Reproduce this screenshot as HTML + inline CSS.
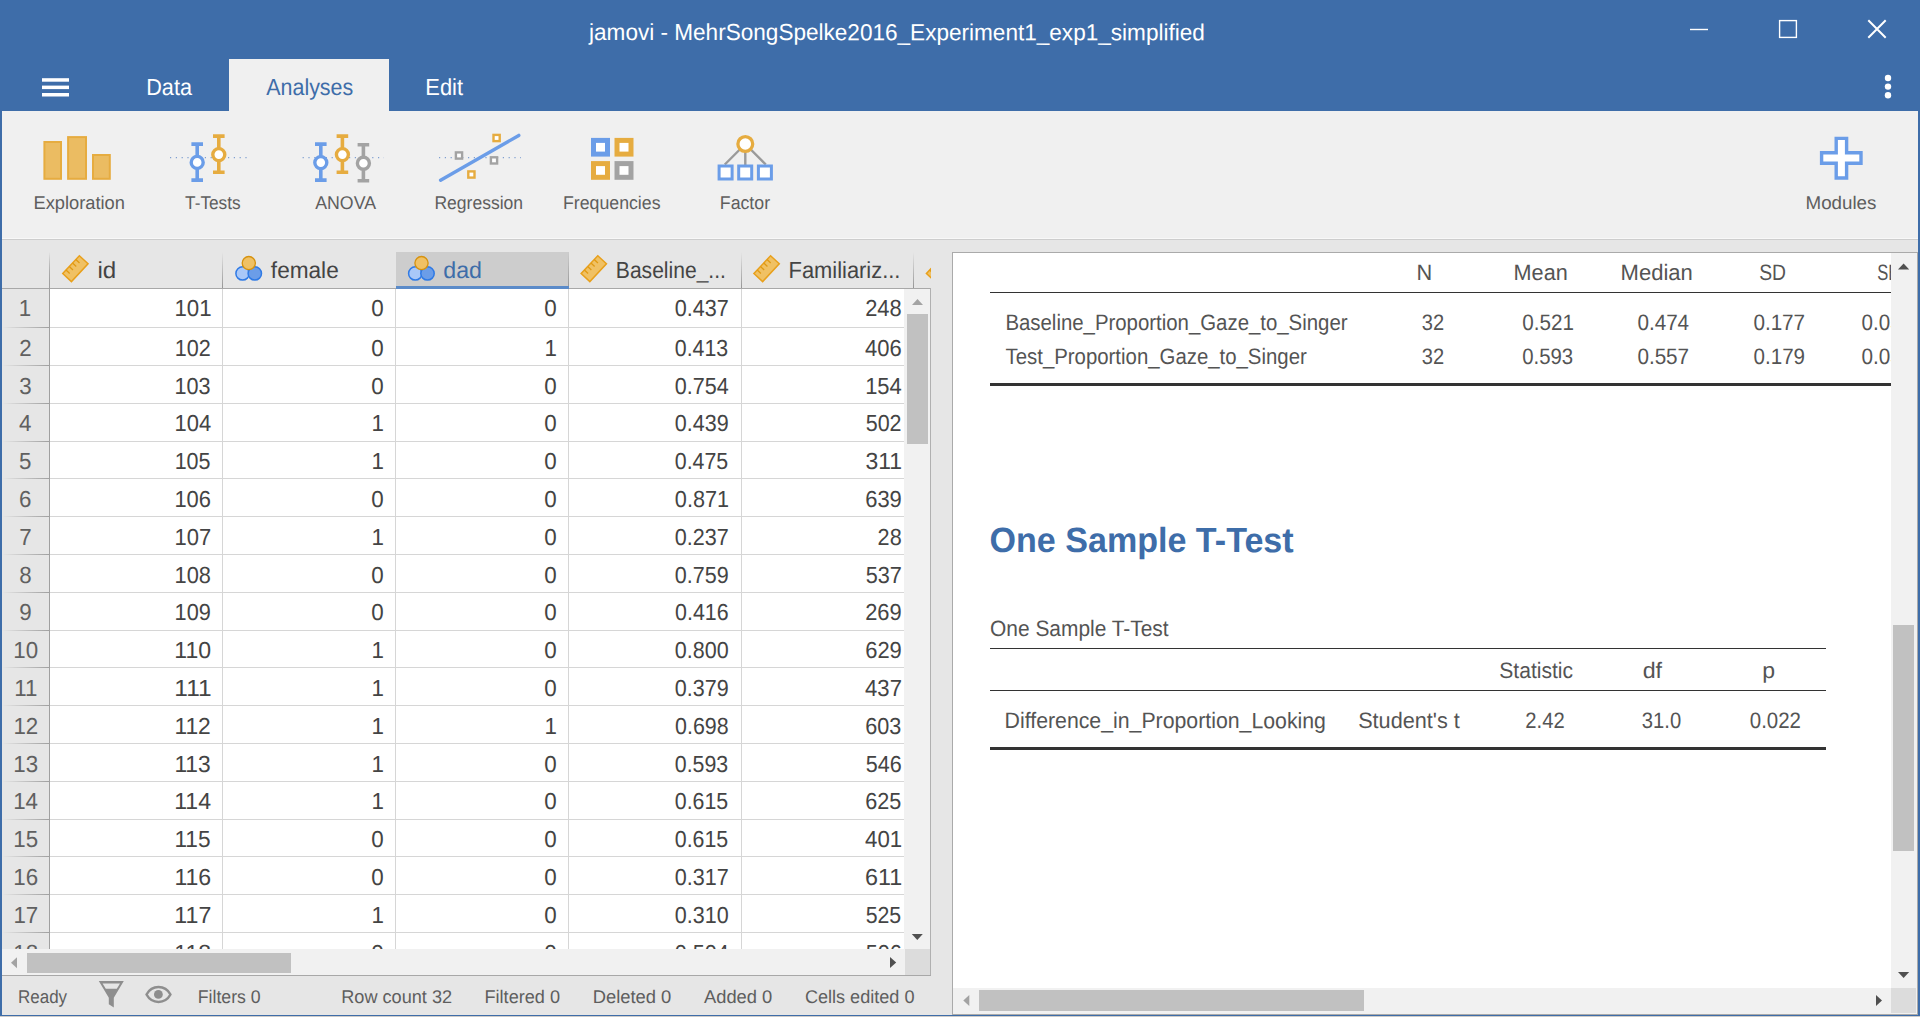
<!DOCTYPE html><html lang="en"><head><meta charset="utf-8"><title>jamovi - MehrSongSpelke2016_Experiment1_exp1_simplified</title>
<style>
html,body{margin:0;padding:0;}
body{width:1920px;height:1017px;overflow:hidden;background:#e6e6e6;position:relative;
font-family:"Liberation Sans",sans-serif;color:#444;}
#app{position:absolute;left:0;top:0;width:1920px;height:1017px;overflow:hidden;}
#app div,#app span,#app svg{position:absolute;}
.t{white-space:pre;line-height:1;}
</style></head><body><div id="app">
<div style="left:0px;top:0px;width:1920px;height:111px;background:#3e6da9;"></div>
<div style="left:229px;top:59px;width:160px;height:52px;background:#f0f0f0;"></div>
<span class="t" style="left:589px;top:21px;font-size:23.3px;transform:translateX(0.03px) rotate(0.03deg) scaleX(0.9685);transform-origin:0 19px;color:#fff;">jamovi - MehrSongSpelke2016_Experiment1_exp1_simplified</span>
<span class="t" style="left:146px;top:76px;font-size:23.3px;transform:translateX(0.21px) rotate(0.03deg) scaleX(0.9290);transform-origin:0 19px;color:#fff;">Data</span>
<span class="t" style="left:266px;top:76px;font-size:23.3px;transform:translateX(0.23px) rotate(0.03deg) scaleX(0.9204);transform-origin:0 19px;color:#3e6da9;">Analyses</span>
<span class="t" style="left:425px;top:76px;font-size:23.3px;transform:translateX(0.30px) rotate(0.03deg) scaleX(0.9380);transform-origin:0 19px;color:#fff;">Edit</span>
<div style="left:2px;top:111px;width:1916px;height:127px;background:#f0f0f0;"></div>
<div style="left:2px;top:238px;width:1916px;height:1px;background:#f8f8f8;"></div>
<div style="left:2px;top:239px;width:1916px;height:1px;background:#cdcdcd;"></div>
<span class="t" style="left:33px;top:194px;font-size:18.4px;transform:translateX(0.49px) rotate(0.03deg) scaleX(0.9941);transform-origin:0 15px;color:#5e5e5e;">Exploration</span>
<span class="t" style="left:185px;top:194px;font-size:18.4px;transform:translateX(0.07px) rotate(0.03deg) scaleX(0.9375);transform-origin:0 15px;color:#5e5e5e;">T-Tests</span>
<span class="t" style="left:315px;top:194px;font-size:18.4px;transform:translateX(0.25px) rotate(0.03deg) scaleX(0.9635);transform-origin:0 15px;color:#5e5e5e;">ANOVA</span>
<span class="t" style="left:434px;top:194px;font-size:18.4px;transform:translateX(0.42px) rotate(0.03deg) scaleX(0.9529);transform-origin:0 15px;color:#5e5e5e;">Regression</span>
<span class="t" style="left:563px;top:194px;font-size:18.4px;transform:translateX(0.00px) rotate(0.03deg) scaleX(0.9636);transform-origin:0 15px;color:#5e5e5e;">Frequencies</span>
<span class="t" style="left:719px;top:194px;font-size:18.4px;transform:translateX(0.81px) rotate(0.03deg) scaleX(0.9638);transform-origin:0 15px;color:#5e5e5e;">Factor</span>
<span class="t" style="left:1805px;top:194px;font-size:18.4px;transform:translateX(0.52px) rotate(0.03deg) scaleX(1.0201);transform-origin:0 15px;color:#5e5e5e;">Modules</span>
<div style="left:50px;top:289px;width:855px;height:660px;background:#fff;"></div>
<div style="left:396px;top:252px;width:173px;height:37px;background:#cdcdcd;"></div>
<div style="left:49px;top:252px;width:1px;height:36px;background:linear-gradient(to bottom,rgba(150,150,150,0),rgba(150,150,150,1));"></div>
<div style="left:222px;top:252px;width:1px;height:36px;background:linear-gradient(to bottom,rgba(150,150,150,0),rgba(150,150,150,1));"></div>
<div style="left:568px;top:252px;width:1px;height:36px;background:linear-gradient(to bottom,rgba(150,150,150,0),rgba(150,150,150,1));"></div>
<div style="left:741px;top:252px;width:1px;height:36px;background:linear-gradient(to bottom,rgba(150,150,150,0),rgba(150,150,150,1));"></div>
<div style="left:913px;top:252px;width:1px;height:36px;background:linear-gradient(to bottom,rgba(150,150,150,0),rgba(150,150,150,1));"></div>
<div style="left:2px;top:288px;width:929px;height:1px;background:#a8a8a8;"></div>
<div style="left:396px;top:286px;width:173px;height:3px;background:#5b8bc9;"></div>
<div style="left:2px;top:289px;width:903px;height:660px;overflow:hidden;">
<div style="left:48px;top:38px;width:855px;height:1px;background:#d6d6d6;"></div>
<div style="left:0px;top:38px;width:47px;height:1px;background:linear-gradient(to right,rgba(160,160,160,0),rgba(160,160,160,1));"></div>
<span class="t" style="left:16px;top:8px;font-size:23.3px;transform:translateX(0.73px) rotate(0.03deg) scaleX(0.9570);transform-origin:0 19px;color:#606060;">1</span>
<span class="t" style="left:172px;top:8px;font-size:23.3px;transform:translateX(0.40px) rotate(0.03deg) scaleX(0.9552);transform-origin:0 19px;">101</span>
<span class="t" style="left:369px;top:8px;font-size:23.3px;transform:translateX(0.15px) rotate(0.03deg) scaleX(0.9600);transform-origin:0 19px;">0</span>
<span class="t" style="left:542px;top:8px;font-size:23.3px;transform:translateX(0.19px) rotate(0.03deg) scaleX(0.9600);transform-origin:0 19px;">0</span>
<span class="t" style="left:672px;top:8px;font-size:23.3px;transform:translateX(0.78px) rotate(0.03deg) scaleX(0.9259);transform-origin:0 19px;">0.437</span>
<span class="t" style="left:863px;top:8px;font-size:23.3px;transform:translateX(0.15px) rotate(0.03deg) scaleX(0.9394);transform-origin:0 19px;">248</span>
<div style="left:48px;top:76px;width:855px;height:1px;background:#d6d6d6;"></div>
<div style="left:0px;top:76px;width:47px;height:1px;background:linear-gradient(to right,rgba(160,160,160,0),rgba(160,160,160,1));"></div>
<span class="t" style="left:17px;top:48px;font-size:23.3px;transform:translateX(0.29px) rotate(0.03deg) scaleX(0.9570);transform-origin:0 19px;color:#606060;">2</span>
<span class="t" style="left:172px;top:48px;font-size:23.3px;transform:translateX(0.75px) rotate(0.03deg) scaleX(0.9255);transform-origin:0 19px;">102</span>
<span class="t" style="left:369px;top:48px;font-size:23.3px;transform:translateX(0.15px) rotate(0.03deg) scaleX(0.9600);transform-origin:0 19px;">0</span>
<span class="t" style="left:542px;top:48px;font-size:23.3px;transform:translateX(0.40px) rotate(0.03deg) scaleX(0.9600);transform-origin:0 19px;">1</span>
<span class="t" style="left:672px;top:48px;font-size:23.3px;transform:translateX(0.80px) rotate(0.03deg) scaleX(0.9151);transform-origin:0 19px;">0.413</span>
<span class="t" style="left:863px;top:48px;font-size:23.3px;transform:translateX(0.04px) rotate(0.03deg) scaleX(0.9411);transform-origin:0 19px;">406</span>
<div style="left:48px;top:114px;width:855px;height:1px;background:#d6d6d6;"></div>
<div style="left:0px;top:114px;width:47px;height:1px;background:linear-gradient(to right,rgba(160,160,160,0),rgba(160,160,160,1));"></div>
<span class="t" style="left:17px;top:86px;font-size:23.3px;transform:translateX(0.25px) rotate(0.03deg) scaleX(0.9570);transform-origin:0 19px;color:#606060;">3</span>
<span class="t" style="left:172px;top:86px;font-size:23.3px;transform:translateX(0.44px) rotate(0.03deg) scaleX(0.9274);transform-origin:0 19px;">103</span>
<span class="t" style="left:369px;top:86px;font-size:23.3px;transform:translateX(0.15px) rotate(0.03deg) scaleX(0.9600);transform-origin:0 19px;">0</span>
<span class="t" style="left:542px;top:86px;font-size:23.3px;transform:translateX(0.19px) rotate(0.03deg) scaleX(0.9600);transform-origin:0 19px;">0</span>
<span class="t" style="left:672px;top:86px;font-size:23.3px;transform:translateX(0.87px) rotate(0.03deg) scaleX(0.9251);transform-origin:0 19px;">0.754</span>
<span class="t" style="left:863px;top:86px;font-size:23.3px;transform:translateX(0.17px) rotate(0.03deg) scaleX(0.9411);transform-origin:0 19px;">154</span>
<div style="left:48px;top:152px;width:855px;height:1px;background:#d6d6d6;"></div>
<div style="left:0px;top:152px;width:47px;height:1px;background:linear-gradient(to right,rgba(160,160,160,0),rgba(160,160,160,1));"></div>
<span class="t" style="left:16px;top:123px;font-size:23.3px;transform:translateX(0.91px) rotate(0.03deg) scaleX(0.9570);transform-origin:0 19px;color:#606060;">4</span>
<span class="t" style="left:172px;top:123px;font-size:23.3px;transform:translateX(0.50px) rotate(0.03deg) scaleX(0.9417);transform-origin:0 19px;">104</span>
<span class="t" style="left:369px;top:123px;font-size:23.3px;transform:translateX(0.54px) rotate(0.03deg) scaleX(0.9600);transform-origin:0 19px;">1</span>
<span class="t" style="left:542px;top:123px;font-size:23.3px;transform:translateX(0.19px) rotate(0.03deg) scaleX(0.9600);transform-origin:0 19px;">0</span>
<span class="t" style="left:672px;top:123px;font-size:23.3px;transform:translateX(0.83px) rotate(0.03deg) scaleX(0.9225);transform-origin:0 19px;">0.439</span>
<span class="t" style="left:863px;top:123px;font-size:23.3px;transform:translateX(0.73px) rotate(0.03deg) scaleX(0.9215);transform-origin:0 19px;">502</span>
<div style="left:48px;top:189px;width:855px;height:1px;background:#d6d6d6;"></div>
<div style="left:0px;top:189px;width:47px;height:1px;background:linear-gradient(to right,rgba(160,160,160,0),rgba(160,160,160,1));"></div>
<span class="t" style="left:16px;top:161px;font-size:23.3px;transform:translateX(0.91px) rotate(0.03deg) scaleX(0.9570);transform-origin:0 19px;color:#606060;">5</span>
<span class="t" style="left:172px;top:161px;font-size:23.3px;transform:translateX(0.66px) rotate(0.03deg) scaleX(0.9232);transform-origin:0 19px;">105</span>
<span class="t" style="left:369px;top:161px;font-size:23.3px;transform:translateX(0.54px) rotate(0.03deg) scaleX(0.9600);transform-origin:0 19px;">1</span>
<span class="t" style="left:542px;top:161px;font-size:23.3px;transform:translateX(0.19px) rotate(0.03deg) scaleX(0.9600);transform-origin:0 19px;">0</span>
<span class="t" style="left:672px;top:161px;font-size:23.3px;transform:translateX(0.81px) rotate(0.03deg) scaleX(0.9164);transform-origin:0 19px;">0.475</span>
<span class="t" style="left:863px;top:161px;font-size:23.3px;transform:translateX(0.51px) rotate(0.03deg) scaleX(0.9864);transform-origin:0 19px;">311</span>
<div style="left:48px;top:227px;width:855px;height:1px;background:#d6d6d6;"></div>
<div style="left:0px;top:227px;width:47px;height:1px;background:linear-gradient(to right,rgba(160,160,160,0),rgba(160,160,160,1));"></div>
<span class="t" style="left:16px;top:199px;font-size:23.3px;transform:translateX(0.91px) rotate(0.03deg) scaleX(0.9570);transform-origin:0 19px;color:#606060;">6</span>
<span class="t" style="left:172px;top:199px;font-size:23.3px;transform:translateX(0.38px) rotate(0.03deg) scaleX(0.9408);transform-origin:0 19px;">106</span>
<span class="t" style="left:369px;top:199px;font-size:23.3px;transform:translateX(0.15px) rotate(0.03deg) scaleX(0.9600);transform-origin:0 19px;">0</span>
<span class="t" style="left:542px;top:199px;font-size:23.3px;transform:translateX(0.19px) rotate(0.03deg) scaleX(0.9600);transform-origin:0 19px;">0</span>
<span class="t" style="left:672px;top:199px;font-size:23.3px;transform:translateX(0.84px) rotate(0.03deg) scaleX(0.9298);transform-origin:0 19px;">0.871</span>
<span class="t" style="left:863px;top:199px;font-size:23.3px;transform:translateX(0.22px) rotate(0.03deg) scaleX(0.9415);transform-origin:0 19px;">639</span>
<div style="left:48px;top:265px;width:855px;height:1px;background:#d6d6d6;"></div>
<div style="left:0px;top:265px;width:47px;height:1px;background:linear-gradient(to right,rgba(160,160,160,0),rgba(160,160,160,1));"></div>
<span class="t" style="left:17px;top:237px;font-size:23.3px;transform:translateX(0.26px) rotate(0.03deg) scaleX(0.9570);transform-origin:0 19px;color:#606060;">7</span>
<span class="t" style="left:172px;top:237px;font-size:23.3px;transform:translateX(0.50px) rotate(0.03deg) scaleX(0.9426);transform-origin:0 19px;">107</span>
<span class="t" style="left:369px;top:237px;font-size:23.3px;transform:translateX(0.54px) rotate(0.03deg) scaleX(0.9600);transform-origin:0 19px;">1</span>
<span class="t" style="left:542px;top:237px;font-size:23.3px;transform:translateX(0.19px) rotate(0.03deg) scaleX(0.9600);transform-origin:0 19px;">0</span>
<span class="t" style="left:672px;top:237px;font-size:23.3px;transform:translateX(0.78px) rotate(0.03deg) scaleX(0.9259);transform-origin:0 19px;">0.237</span>
<span class="t" style="left:875px;top:237px;font-size:23.3px;transform:translateX(0.60px) rotate(0.03deg) scaleX(0.9284);transform-origin:0 19px;">28</span>
<div style="left:48px;top:303px;width:855px;height:1px;background:#d6d6d6;"></div>
<div style="left:0px;top:303px;width:47px;height:1px;background:linear-gradient(to right,rgba(160,160,160,0),rgba(160,160,160,1));"></div>
<span class="t" style="left:17px;top:275px;font-size:23.3px;transform:translateX(0.20px) rotate(0.03deg) scaleX(0.9570);transform-origin:0 19px;color:#606060;">8</span>
<span class="t" style="left:172px;top:275px;font-size:23.3px;transform:translateX(0.61px) rotate(0.03deg) scaleX(0.9358);transform-origin:0 19px;">108</span>
<span class="t" style="left:369px;top:275px;font-size:23.3px;transform:translateX(0.15px) rotate(0.03deg) scaleX(0.9600);transform-origin:0 19px;">0</span>
<span class="t" style="left:542px;top:275px;font-size:23.3px;transform:translateX(0.19px) rotate(0.03deg) scaleX(0.9600);transform-origin:0 19px;">0</span>
<span class="t" style="left:672px;top:275px;font-size:23.3px;transform:translateX(0.83px) rotate(0.03deg) scaleX(0.9225);transform-origin:0 19px;">0.759</span>
<span class="t" style="left:863px;top:275px;font-size:23.3px;transform:translateX(0.74px) rotate(0.03deg) scaleX(0.9294);transform-origin:0 19px;">537</span>
<div style="left:48px;top:341px;width:855px;height:1px;background:#d6d6d6;"></div>
<div style="left:0px;top:341px;width:47px;height:1px;background:linear-gradient(to right,rgba(160,160,160,0),rgba(160,160,160,1));"></div>
<span class="t" style="left:17px;top:312px;font-size:23.3px;transform:translateX(0.24px) rotate(0.03deg) scaleX(0.9570);transform-origin:0 19px;color:#606060;">9</span>
<span class="t" style="left:172px;top:312px;font-size:23.3px;transform:translateX(0.59px) rotate(0.03deg) scaleX(0.9313);transform-origin:0 19px;">109</span>
<span class="t" style="left:369px;top:312px;font-size:23.3px;transform:translateX(0.15px) rotate(0.03deg) scaleX(0.9600);transform-origin:0 19px;">0</span>
<span class="t" style="left:542px;top:312px;font-size:23.3px;transform:translateX(0.19px) rotate(0.03deg) scaleX(0.9600);transform-origin:0 19px;">0</span>
<span class="t" style="left:673px;top:312px;font-size:23.3px;transform:translateX(0.11px) rotate(0.03deg) scaleX(0.9166);transform-origin:0 19px;">0.416</span>
<span class="t" style="left:863px;top:312px;font-size:23.3px;transform:translateX(0.13px) rotate(0.03deg) scaleX(0.9383);transform-origin:0 19px;">269</span>
<div style="left:48px;top:378px;width:855px;height:1px;background:#d6d6d6;"></div>
<div style="left:0px;top:378px;width:47px;height:1px;background:linear-gradient(to right,rgba(160,160,160,0),rgba(160,160,160,1));"></div>
<span class="t" style="left:11px;top:350px;font-size:23.3px;transform:translateX(0.24px) rotate(0.03deg) scaleX(0.9570);transform-origin:0 19px;color:#606060;">10</span>
<span class="t" style="left:172px;top:350px;font-size:23.3px;transform:translateX(0.32px) rotate(0.03deg) scaleX(0.9907);transform-origin:0 19px;">110</span>
<span class="t" style="left:369px;top:350px;font-size:23.3px;transform:translateX(0.54px) rotate(0.03deg) scaleX(0.9600);transform-origin:0 19px;">1</span>
<span class="t" style="left:542px;top:350px;font-size:23.3px;transform:translateX(0.19px) rotate(0.03deg) scaleX(0.9600);transform-origin:0 19px;">0</span>
<span class="t" style="left:672px;top:350px;font-size:23.3px;transform:translateX(0.87px) rotate(0.03deg) scaleX(0.9229);transform-origin:0 19px;">0.800</span>
<span class="t" style="left:863px;top:350px;font-size:23.3px;transform:translateX(0.22px) rotate(0.03deg) scaleX(0.9415);transform-origin:0 19px;">629</span>
<div style="left:48px;top:416px;width:855px;height:1px;background:#d6d6d6;"></div>
<div style="left:0px;top:416px;width:47px;height:1px;background:linear-gradient(to right,rgba(160,160,160,0),rgba(160,160,160,1));"></div>
<span class="t" style="left:12px;top:388px;font-size:23.3px;transform:translateX(0.33px) rotate(0.03deg) scaleX(0.9570);transform-origin:0 19px;color:#606060;">11</span>
<span class="t" style="left:172px;top:388px;font-size:23.3px;transform:translateX(0.37px) rotate(0.03deg) scaleX(1.0504);transform-origin:0 19px;">111</span>
<span class="t" style="left:369px;top:388px;font-size:23.3px;transform:translateX(0.54px) rotate(0.03deg) scaleX(0.9600);transform-origin:0 19px;">1</span>
<span class="t" style="left:542px;top:388px;font-size:23.3px;transform:translateX(0.19px) rotate(0.03deg) scaleX(0.9600);transform-origin:0 19px;">0</span>
<span class="t" style="left:672px;top:388px;font-size:23.3px;transform:translateX(0.83px) rotate(0.03deg) scaleX(0.9225);transform-origin:0 19px;">0.379</span>
<span class="t" style="left:863px;top:388px;font-size:23.3px;transform:translateX(0.11px) rotate(0.03deg) scaleX(0.9466);transform-origin:0 19px;">437</span>
<div style="left:48px;top:454px;width:855px;height:1px;background:#d6d6d6;"></div>
<div style="left:0px;top:454px;width:47px;height:1px;background:linear-gradient(to right,rgba(160,160,160,0),rgba(160,160,160,1));"></div>
<span class="t" style="left:11px;top:426px;font-size:23.3px;transform:translateX(0.45px) rotate(0.03deg) scaleX(0.9570);transform-origin:0 19px;color:#606060;">12</span>
<span class="t" style="left:172px;top:426px;font-size:23.3px;transform:translateX(0.43px) rotate(0.03deg) scaleX(0.9784);transform-origin:0 19px;">112</span>
<span class="t" style="left:369px;top:426px;font-size:23.3px;transform:translateX(0.54px) rotate(0.03deg) scaleX(0.9600);transform-origin:0 19px;">1</span>
<span class="t" style="left:542px;top:426px;font-size:23.3px;transform:translateX(0.40px) rotate(0.03deg) scaleX(0.9600);transform-origin:0 19px;">1</span>
<span class="t" style="left:673px;top:426px;font-size:23.3px;transform:translateX(0.11px) rotate(0.03deg) scaleX(0.9166);transform-origin:0 19px;">0.698</span>
<span class="t" style="left:863px;top:426px;font-size:23.3px;transform:translateX(0.30px) rotate(0.03deg) scaleX(0.9267);transform-origin:0 19px;">603</span>
<div style="left:48px;top:492px;width:855px;height:1px;background:#d6d6d6;"></div>
<div style="left:0px;top:492px;width:47px;height:1px;background:linear-gradient(to right,rgba(160,160,160,0),rgba(160,160,160,1));"></div>
<span class="t" style="left:11px;top:464px;font-size:23.3px;transform:translateX(0.28px) rotate(0.03deg) scaleX(0.9570);transform-origin:0 19px;color:#606060;">13</span>
<span class="t" style="left:172px;top:464px;font-size:23.3px;transform:translateX(0.38px) rotate(0.03deg) scaleX(0.9775);transform-origin:0 19px;">113</span>
<span class="t" style="left:369px;top:464px;font-size:23.3px;transform:translateX(0.54px) rotate(0.03deg) scaleX(0.9600);transform-origin:0 19px;">1</span>
<span class="t" style="left:542px;top:464px;font-size:23.3px;transform:translateX(0.19px) rotate(0.03deg) scaleX(0.9600);transform-origin:0 19px;">0</span>
<span class="t" style="left:672px;top:464px;font-size:23.3px;transform:translateX(0.80px) rotate(0.03deg) scaleX(0.9151);transform-origin:0 19px;">0.593</span>
<span class="t" style="left:863px;top:464px;font-size:23.3px;transform:translateX(0.76px) rotate(0.03deg) scaleX(0.9241);transform-origin:0 19px;">546</span>
<div style="left:48px;top:530px;width:855px;height:1px;background:#d6d6d6;"></div>
<div style="left:0px;top:530px;width:47px;height:1px;background:linear-gradient(to right,rgba(160,160,160,0),rgba(160,160,160,1));"></div>
<span class="t" style="left:11px;top:501px;font-size:23.3px;transform:translateX(0.22px) rotate(0.03deg) scaleX(0.9570);transform-origin:0 19px;color:#606060;">14</span>
<span class="t" style="left:172px;top:501px;font-size:23.3px;transform:translateX(0.19px) rotate(0.03deg) scaleX(0.9913);transform-origin:0 19px;">114</span>
<span class="t" style="left:369px;top:501px;font-size:23.3px;transform:translateX(0.54px) rotate(0.03deg) scaleX(0.9600);transform-origin:0 19px;">1</span>
<span class="t" style="left:542px;top:501px;font-size:23.3px;transform:translateX(0.19px) rotate(0.03deg) scaleX(0.9600);transform-origin:0 19px;">0</span>
<span class="t" style="left:672px;top:501px;font-size:23.3px;transform:translateX(0.81px) rotate(0.03deg) scaleX(0.9164);transform-origin:0 19px;">0.615</span>
<span class="t" style="left:863px;top:501px;font-size:23.3px;transform:translateX(0.18px) rotate(0.03deg) scaleX(0.9268);transform-origin:0 19px;">625</span>
<div style="left:48px;top:567px;width:855px;height:1px;background:#d6d6d6;"></div>
<div style="left:0px;top:567px;width:47px;height:1px;background:linear-gradient(to right,rgba(160,160,160,0),rgba(160,160,160,1));"></div>
<span class="t" style="left:11px;top:539px;font-size:23.3px;transform:translateX(0.26px) rotate(0.03deg) scaleX(0.9570);transform-origin:0 19px;color:#606060;">15</span>
<span class="t" style="left:172px;top:539px;font-size:23.3px;transform:translateX(0.43px) rotate(0.03deg) scaleX(0.9719);transform-origin:0 19px;">115</span>
<span class="t" style="left:369px;top:539px;font-size:23.3px;transform:translateX(0.15px) rotate(0.03deg) scaleX(0.9600);transform-origin:0 19px;">0</span>
<span class="t" style="left:542px;top:539px;font-size:23.3px;transform:translateX(0.19px) rotate(0.03deg) scaleX(0.9600);transform-origin:0 19px;">0</span>
<span class="t" style="left:672px;top:539px;font-size:23.3px;transform:translateX(0.81px) rotate(0.03deg) scaleX(0.9164);transform-origin:0 19px;">0.615</span>
<span class="t" style="left:863px;top:539px;font-size:23.3px;transform:translateX(0.10px) rotate(0.03deg) scaleX(0.9544);transform-origin:0 19px;">401</span>
<div style="left:48px;top:605px;width:855px;height:1px;background:#d6d6d6;"></div>
<div style="left:0px;top:605px;width:47px;height:1px;background:linear-gradient(to right,rgba(160,160,160,0),rgba(160,160,160,1));"></div>
<span class="t" style="left:11px;top:577px;font-size:23.3px;transform:translateX(0.28px) rotate(0.03deg) scaleX(0.9570);transform-origin:0 19px;color:#606060;">16</span>
<span class="t" style="left:172px;top:577px;font-size:23.3px;transform:translateX(0.44px) rotate(0.03deg) scaleX(0.9891);transform-origin:0 19px;">116</span>
<span class="t" style="left:369px;top:577px;font-size:23.3px;transform:translateX(0.15px) rotate(0.03deg) scaleX(0.9600);transform-origin:0 19px;">0</span>
<span class="t" style="left:542px;top:577px;font-size:23.3px;transform:translateX(0.19px) rotate(0.03deg) scaleX(0.9600);transform-origin:0 19px;">0</span>
<span class="t" style="left:672px;top:577px;font-size:23.3px;transform:translateX(0.78px) rotate(0.03deg) scaleX(0.9259);transform-origin:0 19px;">0.317</span>
<span class="t" style="left:863px;top:577px;font-size:23.3px;transform:translateX(0.07px) rotate(0.03deg) scaleX(1.0013);transform-origin:0 19px;">611</span>
<div style="left:48px;top:643px;width:855px;height:1px;background:#d6d6d6;"></div>
<div style="left:0px;top:643px;width:47px;height:1px;background:linear-gradient(to right,rgba(160,160,160,0),rgba(160,160,160,1));"></div>
<span class="t" style="left:11px;top:615px;font-size:23.3px;transform:translateX(0.43px) rotate(0.03deg) scaleX(0.9570);transform-origin:0 19px;color:#606060;">17</span>
<span class="t" style="left:172px;top:615px;font-size:23.3px;transform:translateX(0.33px) rotate(0.03deg) scaleX(0.9950);transform-origin:0 19px;">117</span>
<span class="t" style="left:369px;top:615px;font-size:23.3px;transform:translateX(0.54px) rotate(0.03deg) scaleX(0.9600);transform-origin:0 19px;">1</span>
<span class="t" style="left:542px;top:615px;font-size:23.3px;transform:translateX(0.19px) rotate(0.03deg) scaleX(0.9600);transform-origin:0 19px;">0</span>
<span class="t" style="left:672px;top:615px;font-size:23.3px;transform:translateX(0.87px) rotate(0.03deg) scaleX(0.9229);transform-origin:0 19px;">0.310</span>
<span class="t" style="left:863px;top:615px;font-size:23.3px;transform:translateX(0.67px) rotate(0.03deg) scaleX(0.9136);transform-origin:0 19px;">525</span>
<div style="left:48px;top:681px;width:855px;height:1px;background:#d6d6d6;"></div>
<div style="left:0px;top:681px;width:47px;height:1px;background:linear-gradient(to right,rgba(160,160,160,0),rgba(160,160,160,1));"></div>
<span class="t" style="left:11px;top:653px;font-size:23.3px;transform:translateX(0.28px) rotate(0.03deg) scaleX(0.9570);transform-origin:0 19px;color:#606060;">18</span>
<span class="t" style="left:172px;top:653px;font-size:23.3px;transform:translateX(0.34px) rotate(0.03deg) scaleX(0.9869);transform-origin:0 19px;">118</span>
<span class="t" style="left:369px;top:653px;font-size:23.3px;transform:translateX(0.15px) rotate(0.03deg) scaleX(0.9600);transform-origin:0 19px;">0</span>
<span class="t" style="left:542px;top:653px;font-size:23.3px;transform:translateX(0.19px) rotate(0.03deg) scaleX(0.9600);transform-origin:0 19px;">0</span>
<span class="t" style="left:672px;top:653px;font-size:23.3px;transform:translateX(0.87px) rotate(0.03deg) scaleX(0.9251);transform-origin:0 19px;">0.504</span>
<span class="t" style="left:863px;top:653px;font-size:23.3px;transform:translateX(0.76px) rotate(0.03deg) scaleX(0.9241);transform-origin:0 19px;">506</span>
<div style="left:220px;top:0;width:1px;height:660px;background:#d6d6d6;"></div>
<div style="left:393px;top:0;width:1px;height:660px;background:#d6d6d6;"></div>
<div style="left:566px;top:0;width:1px;height:660px;background:#d6d6d6;"></div>
<div style="left:739px;top:0;width:1px;height:660px;background:#d6d6d6;"></div>
</div>
<div style="left:49px;top:252px;width:1px;height:697px;background:linear-gradient(to bottom,rgba(160,160,160,0) 0px,rgba(160,160,160,1) 36px);"></div>
<span class="t" style="left:97px;top:259px;font-size:23.3px;transform:translateX(0.49px) rotate(0.03deg) scaleX(1.0344);transform-origin:0 19px;">id</span>
<span class="t" style="left:270px;top:259px;font-size:23.3px;transform:translateX(0.86px) rotate(0.03deg) scaleX(0.9703);transform-origin:0 19px;">female</span>
<span class="t" style="left:443px;top:259px;font-size:23.3px;transform:translateX(0.27px) rotate(0.03deg) scaleX(0.9946);transform-origin:0 19px;color:#3e6da9;">dad</span>
<span class="t" style="left:615px;top:259px;font-size:23.3px;transform:translateX(0.87px) rotate(0.03deg) scaleX(0.9038);transform-origin:0 19px;">Baseline_...</span>
<span class="t" style="left:788px;top:259px;font-size:23.3px;transform:translateX(0.53px) rotate(0.03deg) scaleX(0.9394);transform-origin:0 19px;">Familiariz...</span>
<div style="left:904px;top:289px;width:26px;height:660px;background:#f1f1f1;"></div>
<div style="left:907px;top:314px;width:21px;height:130px;background:#c1c1c1;"></div>
<div style="left:2px;top:949px;width:903px;height:26px;background:#f1f1f1;"></div>
<div style="left:27px;top:952.5px;width:264px;height:20.5px;background:#c1c1c1;"></div>
<div style="left:905px;top:949px;width:25px;height:26px;background:#dcdcdc;"></div>
<div style="left:930px;top:288px;width:1px;height:688px;background:#b0b0b0;"></div>
<div style="left:2px;top:975px;width:929px;height:1px;background:#a8a8a8;"></div>
<span class="t" style="left:18px;top:988px;font-size:18.4px;transform:translateX(0.06px) rotate(0.03deg) scaleX(0.9223);transform-origin:0 15px;color:#5e5e5e;">Ready</span>
<span class="t" style="left:197px;top:988px;font-size:18.4px;transform:translateX(0.77px) rotate(0.03deg) scaleX(0.9614);transform-origin:0 15px;color:#5e5e5e;">Filters 0</span>
<span class="t" style="left:341px;top:988px;font-size:18.4px;transform:translateX(0.25px) rotate(0.03deg) scaleX(0.9858);transform-origin:0 15px;color:#5e5e5e;">Row count 32</span>
<span class="t" style="left:484px;top:988px;font-size:18.4px;transform:translateX(0.52px) rotate(0.03deg) scaleX(0.9840);transform-origin:0 15px;color:#5e5e5e;">Filtered 0</span>
<span class="t" style="left:592px;top:988px;font-size:18.4px;transform:translateX(0.68px) rotate(0.03deg) scaleX(0.9991);transform-origin:0 15px;color:#5e5e5e;">Deleted 0</span>
<span class="t" style="left:704px;top:988px;font-size:18.4px;transform:translateX(0.03px) rotate(0.03deg) scaleX(0.9960);transform-origin:0 15px;color:#5e5e5e;">Added 0</span>
<span class="t" style="left:804px;top:988px;font-size:18.4px;transform:translateX(0.89px) rotate(0.03deg) scaleX(0.9831);transform-origin:0 15px;color:#5e5e5e;">Cells edited 0</span>
<div style="left:952px;top:252px;width:966px;height:763px;background:#fff;border:1px solid #aaa;box-sizing:border-box;"></div>
<div style="left:953px;top:253px;width:938px;height:735px;overflow:hidden;">
<span class="t" style="left:463px;top:9px;font-size:22.3px;transform:translateX(0.57px) rotate(0.03deg) scaleX(0.9764);transform-origin:0 18px;color:#545454;">N</span>
<span class="t" style="left:560px;top:9px;font-size:22.3px;transform:translateX(0.60px) rotate(0.03deg) scaleX(0.9702);transform-origin:0 18px;color:#545454;">Mean</span>
<span class="t" style="left:667px;top:9px;font-size:22.3px;transform:translateX(0.57px) rotate(0.03deg) scaleX(0.9873);transform-origin:0 18px;color:#545454;">Median</span>
<span class="t" style="left:806px;top:9px;font-size:22.3px;transform:translateX(0.19px) rotate(0.03deg) scaleX(0.8651);transform-origin:0 18px;color:#545454;">SD</span>
<span class="t" style="left:924px;top:9px;font-size:22.3px;transform:translateX(0.15px) rotate(0.03deg) scaleX(0.7400);transform-origin:0 18px;color:#545454;">SE</span>
<div style="left:37px;top:39px;width:1000px;height:1px;background:#333;"></div>
<span class="t" style="left:52px;top:59px;font-size:22.3px;transform:translateX(0.41px) rotate(0.03deg) scaleX(0.9139);transform-origin:0 18px;color:#545454;">Baseline_Proportion_Gaze_to_Singer</span>
<span class="t" style="left:52px;top:93px;font-size:22.3px;transform:translateX(0.55px) rotate(0.03deg) scaleX(0.9135);transform-origin:0 18px;color:#545454;">Test_Proportion_Gaze_to_Singer</span>
<span class="t" style="left:468px;top:59px;font-size:22.3px;transform:translateX(0.84px) rotate(0.03deg) scaleX(0.8993);transform-origin:0 18px;color:#545454;">32</span>
<span class="t" style="left:569px;top:59px;font-size:22.3px;transform:translateX(0.22px) rotate(0.03deg) scaleX(0.9261);transform-origin:0 18px;color:#545454;">0.521</span>
<span class="t" style="left:684px;top:59px;font-size:22.3px;transform:translateX(0.41px) rotate(0.03deg) scaleX(0.9265);transform-origin:0 18px;color:#545454;">0.474</span>
<span class="t" style="left:800px;top:59px;font-size:22.3px;transform:translateX(0.41px) rotate(0.03deg) scaleX(0.9263);transform-origin:0 18px;color:#545454;">0.177</span>
<span class="t" style="left:908px;top:59px;font-size:22.3px;transform:translateX(0.60px) rotate(0.03deg) scaleX(0.9217);transform-origin:0 18px;color:#545454;">0.0323</span>
<span class="t" style="left:468px;top:93px;font-size:22.3px;transform:translateX(0.84px) rotate(0.03deg) scaleX(0.8993);transform-origin:0 18px;color:#545454;">32</span>
<span class="t" style="left:569px;top:93px;font-size:22.3px;transform:translateX(0.22px) rotate(0.03deg) scaleX(0.9118);transform-origin:0 18px;color:#545454;">0.593</span>
<span class="t" style="left:684px;top:93px;font-size:22.3px;transform:translateX(0.41px) rotate(0.03deg) scaleX(0.9263);transform-origin:0 18px;color:#545454;">0.557</span>
<span class="t" style="left:800px;top:93px;font-size:22.3px;transform:translateX(0.56px) rotate(0.03deg) scaleX(0.9223);transform-origin:0 18px;color:#545454;">0.179</span>
<span class="t" style="left:908px;top:93px;font-size:22.3px;transform:translateX(0.51px) rotate(0.03deg) scaleX(0.9291);transform-origin:0 18px;color:#545454;">0.0326</span>
<div style="left:37px;top:130px;width:1000px;height:3px;background:#333;"></div>
<span class="t" style="left:36px;top:269px;font-size:35px;transform:translateX(0.57px) rotate(0.03deg) scaleX(0.9730);transform-origin:0 30px;font-weight:700;color:#3e6da9;">One Sample T-Test</span>
<span class="t" style="left:37px;top:365px;font-size:22.3px;transform:translateX(0.08px) rotate(0.03deg) scaleX(0.9375);transform-origin:0 18px;color:#545454;">One Sample T-Test</span>
<div style="left:37px;top:395px;width:836px;height:1px;background:#333;"></div>
<span class="t" style="left:546px;top:407px;font-size:22.3px;transform:translateX(0.33px) rotate(0.03deg) scaleX(0.9443);transform-origin:0 18px;color:#545454;">Statistic</span>
<span class="t" style="left:689px;top:407px;font-size:22.3px;transform:translateX(0.63px) rotate(0.03deg) scaleX(1.0419);transform-origin:0 18px;color:#545454;">df</span>
<span class="t" style="left:809px;top:407px;font-size:22.3px;transform:translateX(0.31px) rotate(0.03deg) scaleX(1.0324);transform-origin:0 18px;color:#545454;">p</span>
<div style="left:37px;top:437px;width:836px;height:1px;background:#333;"></div>
<span class="t" style="left:51px;top:457px;font-size:22.3px;transform:translateX(0.62px) rotate(0.03deg) scaleX(0.9541);transform-origin:0 18px;color:#545454;">Difference_in_Proportion_Looking</span>
<span class="t" style="left:405px;top:457px;font-size:22.3px;transform:translateX(0.15px) rotate(0.03deg) scaleX(0.9705);transform-origin:0 18px;color:#545454;">Student's t</span>
<span class="t" style="left:572px;top:457px;font-size:22.3px;transform:translateX(0.31px) rotate(0.03deg) scaleX(0.9056);transform-origin:0 18px;color:#545454;">2.42</span>
<span class="t" style="left:688px;top:457px;font-size:22.3px;transform:translateX(0.86px) rotate(0.03deg) scaleX(0.9048);transform-origin:0 18px;color:#545454;">31.0</span>
<span class="t" style="left:796px;top:457px;font-size:22.3px;transform:translateX(0.80px) rotate(0.03deg) scaleX(0.9173);transform-origin:0 18px;color:#545454;">0.022</span>
<div style="left:37px;top:494px;width:836px;height:3px;background:#333;"></div>
</div>
<div style="left:1891px;top:253px;width:26px;height:735px;background:#f1f1f1;"></div>
<div style="left:1893px;top:625px;width:21px;height:226px;background:#c1c1c1;"></div>
<div style="left:953px;top:988px;width:964px;height:26px;background:#f1f1f1;"></div>
<div style="left:979px;top:990px;width:385px;height:21px;background:#c1c1c1;"></div>
<div style="left:1891px;top:988px;width:25px;height:25px;background:#dcdcdc;"></div>
<div style="left:0px;top:0px;width:2px;height:1017px;background:#3e6da9;"></div>
<div style="left:1918px;top:0px;width:2px;height:1017px;background:#3e6da9;"></div>
<div style="left:0px;top:1015px;width:1920px;height:1px;background:#3e6da9;"></div>
<div style="left:0px;top:1016px;width:1920px;height:1px;background:#cfccc8;"></div>
<svg width="1920" height="1017" viewBox="0 0 1920 1017" style="left:0;top:0;">
<g stroke="#fff" fill="none">
<path d="M1690 29.5H1708" stroke-width="1.4"/>
<rect x="1779.6" y="20.6" width="16.8" height="16.8" stroke-width="1.4"/>
<path d="M1868.3 20.3L1885.7 37.7M1885.7 20.3L1868.3 37.7" stroke-width="2"/>
</g>
<g fill="#fff"><circle cx="1888" cy="78" r="3.2"/><circle cx="1888" cy="86.6" r="3.2"/><circle cx="1888" cy="95.2" r="3.2"/>
<rect x="42" y="78.2" width="27" height="3.5"/><rect x="42" y="85.6" width="27" height="3.5"/><rect x="42" y="93" width="27" height="3.5"/></g>
<rect x="44.4" y="142" width="16.6" height="36.8" fill="#ebbc62" stroke="#e6ac40" stroke-width="2"/>
<rect x="68.1" y="137.1" width="17.9" height="41.7" fill="#ebbc62" stroke="#e6ac40" stroke-width="2"/>
<rect x="93" y="155" width="16.8" height="23.8" fill="#ebbc62" stroke="#e6ac40" stroke-width="2"/>
<path d="M170 157.6H251" stroke="#7f9fd0" stroke-width="1.2" stroke-dasharray="1.2 4.6" fill="none"/>
<g stroke="#6b9de8" fill="none"><path d="M197.2 144.1V180.1" stroke-width="3.6"/><path d="M191.39999999999998 144.1H203.0M191.39999999999998 180.1H203.0" stroke-width="3.6"/><circle cx="197.2" cy="162.4" r="6" stroke-width="3.4" fill="#fff"/></g>
<g stroke="#e6ac40" fill="none"><path d="M218.8 136.1V172.2" stroke-width="3.6"/><path d="M213.0 136.1H224.60000000000002M213.0 172.2H224.60000000000002" stroke-width="3.6"/><circle cx="218.8" cy="154.6" r="6" stroke-width="3.4" fill="#fff"/></g>
<path d="M302.6 157.6H384" stroke="#7f9fd0" stroke-width="1.2" stroke-dasharray="1.2 4.6" fill="none"/>
<g stroke="#6b9de8" fill="none"><path d="M320.8 144.1V180.1" stroke-width="3.6"/><path d="M315.0 144.1H326.6M315.0 180.1H326.6" stroke-width="3.6"/><circle cx="320.8" cy="162.6" r="6" stroke-width="3.4" fill="#fff"/></g>
<g stroke="#e6ac40" fill="none"><path d="M342.4 136.1V172.2" stroke-width="3.6"/><path d="M336.59999999999997 136.1H348.2M336.59999999999997 172.2H348.2" stroke-width="3.6"/><circle cx="342.4" cy="154.6" r="6" stroke-width="3.4" fill="#fff"/></g>
<g stroke="#a3a3a3" fill="none"><path d="M363.4 144.8V180.8" stroke-width="3.6"/><path d="M357.59999999999997 144.8H369.2M357.59999999999997 180.8H369.2" stroke-width="3.6"/><circle cx="363.4" cy="163.3" r="6" stroke-width="3.4" fill="#fff"/></g>
<path d="M439 157.6H521" stroke="#7f9fd0" stroke-width="1.2" stroke-dasharray="1.2 4.6" fill="none"/>
<rect x="493.5" y="134.9" width="6.2" height="6.2" fill="#fff" stroke="#e6ac40" stroke-width="2.4"/>
<rect x="455.9" y="152.4" width="6.2" height="6.2" fill="#fff" stroke="#a3a3a3" stroke-width="2.4"/>
<rect x="490.9" y="157.3" width="6.2" height="6.2" fill="#fff" stroke="#a3a3a3" stroke-width="2.4"/>
<rect x="468.3" y="171.4" width="6.2" height="6.2" fill="#fff" stroke="#e6ac40" stroke-width="2.4"/>
<path d="M440.6 180.2L518.8 135.4" stroke="#6b9de8" stroke-width="3.4" stroke-linecap="round" fill="none"/>
<rect x="593.5" y="140.4" width="14" height="13.7" fill="#fff" stroke="#6b9de8" stroke-width="5"/>
<rect x="617.0" y="140.4" width="14" height="13.7" fill="#fff" stroke="#e6ac40" stroke-width="5"/>
<rect x="593.5" y="163.6" width="14" height="13.7" fill="#fff" stroke="#e6ac40" stroke-width="5"/>
<rect x="617.0" y="163.6" width="14" height="13.7" fill="#fff" stroke="#a3a3a3" stroke-width="5"/>
<path d="M745.3 144L724.8 164.5M745.3 144V165M745.3 144L765.8 164.5" stroke="#9a9a9a" stroke-width="2.4" fill="none"/>
<circle cx="745.3" cy="144" r="7.4" fill="#fff" stroke="#e6ac40" stroke-width="3.3"/>
<rect x="719.1" y="166" width="13" height="13" fill="#fff" stroke="#6b9de8" stroke-width="3"/>
<rect x="738.7" y="166" width="13" height="13" fill="#fff" stroke="#6b9de8" stroke-width="3"/>
<rect x="758.4" y="166" width="13" height="13" fill="#fff" stroke="#6b9de8" stroke-width="3"/>
<path d="M1836.2 138.4h10.4v14.4h14.4v10.4h-14.4v14.8h-10.4v-14.8h-14.6v-10.4h14.6z" fill="#fff" stroke="#6b9de8" stroke-width="3.4"/>
<g transform="translate(75.4 268.7) rotate(-47)"><rect x="-12.2" y="-5.95" width="24.4" height="11.9" fill="#f0c164" stroke="#e8a01c" stroke-width="1.5"/><path d="M-7.4 -5.9v5M-2.6 -5.9v5M2.2 -5.9v5M7 -5.9v5" stroke="#e09a14" stroke-width="1.3" fill="none"/></g>
<g transform="translate(593.8 268.7) rotate(-47)"><rect x="-12.2" y="-5.95" width="24.4" height="11.9" fill="#f0c164" stroke="#e8a01c" stroke-width="1.5"/><path d="M-7.4 -5.9v5M-2.6 -5.9v5M2.2 -5.9v5M7 -5.9v5" stroke="#e09a14" stroke-width="1.3" fill="none"/></g>
<g transform="translate(766.6 268.7) rotate(-47)"><rect x="-12.2" y="-5.95" width="24.4" height="11.9" fill="#f0c164" stroke="#e8a01c" stroke-width="1.5"/><path d="M-7.4 -5.9v5M-2.6 -5.9v5M2.2 -5.9v5M7 -5.9v5" stroke="#e09a14" stroke-width="1.3" fill="none"/></g>
<svg x="900" y="250" width="31" height="40" viewBox="900 250 31 40" style="position:static;overflow:hidden">
<g transform="translate(939.1 268.7) rotate(-47)"><rect x="-12.2" y="-5.95" width="24.4" height="11.9" fill="#f0c164" stroke="#e8a01c" stroke-width="1.5"/><path d="M-7.4 -5.9v5M-2.6 -5.9v5M2.2 -5.9v5M7 -5.9v5" stroke="#e09a14" stroke-width="1.3" fill="none"/></g>
</svg>
<circle cx="242.60000000000002" cy="273.4" r="6.7" fill="#a9c8f8" stroke="#2f7ae5" stroke-width="1.5"/>
<circle cx="254.8" cy="273.4" r="6.7" fill="#6b9de8" stroke="#2f7ae5" stroke-width="1.5"/>
<circle cx="248.8" cy="263.1" r="6.6" fill="#f0c164" stroke="#d6920f" stroke-width="1.3"/>
<circle cx="415.3" cy="273.4" r="6.7" fill="#a9c8f8" stroke="#2f7ae5" stroke-width="1.5"/>
<circle cx="427.5" cy="273.4" r="6.7" fill="#6b9de8" stroke="#2f7ae5" stroke-width="1.5"/>
<circle cx="421.5" cy="263.1" r="6.6" fill="#f0c164" stroke="#d6920f" stroke-width="1.3"/>
<path d="M912 305L923 305L917.5 299z" fill="#a3a3a3"/>
<path d="M911.8 934L922.8 934L917.3 940z" fill="#505050"/>
<path d="M17 957.2L17 968.2L11 962.7z" fill="#a3a3a3"/>
<path d="M890 957L890 968L896.2 962.5z" fill="#505050"/>
<path d="M1898 269.6L1909.2 269.6L1903.6 263.6z" fill="#505050"/>
<path d="M1898 972L1909.2 972L1903.6 978z" fill="#505050"/>
<path d="M969.3 995L969.3 1006L963.3 1000.5z" fill="#a3a3a3"/>
<path d="M1876 995L1876 1006L1882 1000.5z" fill="#505050"/>
<path d="M98.8 981h25l-10 16.8v9.8l-5-3.4v-6.4z" fill="#8e8e8e"/>
<path d="M102.6 983.4h17.4l-3.2 5.4h-11z" fill="#e6e6e6"/>
<path d="M146.5 994.5C152 984.6 165 984.6 170.5 994.5C165 1004.4 152 1004.4 146.5 994.5z" fill="none" stroke="#8e8e8e" stroke-width="2.5" stroke-linejoin="round"/>
<circle cx="158.4" cy="994.4" r="4.4" fill="#8e8e8e"/>
</svg>
</div></body></html>
